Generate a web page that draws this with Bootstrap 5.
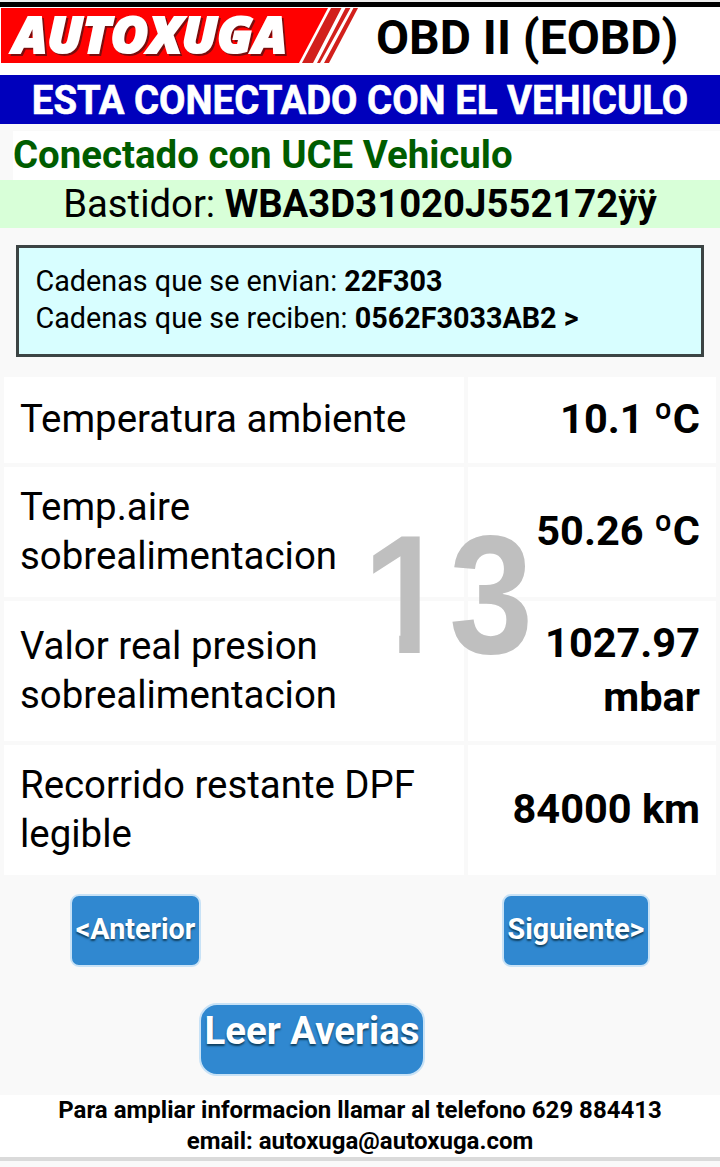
<!DOCTYPE html>
<html lang="es">
<head>
<meta charset="utf-8">
<meta name="viewport" content="width=device-width, initial-scale=1">
<title>AUTOXUGA OBD II (EOBD)</title>
<link rel="stylesheet" href="https://cdn.jsdelivr.net/npm/bootstrap@5.3.0/dist/css/bootstrap.min.css">
<style>
body{font-family:Roboto,"Liberation Sans",sans-serif;background:#f9f9f9;color:#000;height:1167px;overflow:hidden}
.topline{height:7px;background:#000;border-top:2px solid #eee}
.brandbar{height:68px;background:#fff}
.logo{width:360px;height:56px;flex:none;overflow:visible}
.brandtitle{font-size:48px;line-height:62px;font-weight:700;padding-left:16px;white-space:nowrap}
.connbar{height:49px;line-height:50px;font-size:41px;background:#0000bc;color:#fff;white-space:nowrap}
.connbar span{display:inline-block;transform:scaleX(.935);-webkit-text-stroke:.6px #fff}
.ecu{height:49px;line-height:48px;margin:7px 0 0 13px;font-size:38.4px;color:#005c00;background:#fff;white-space:nowrap}
.vin{height:48px;line-height:48px;font-size:38.3px;background:#d8ffd8;white-space:nowrap}
.frames{margin:17px 16px 20px;height:112px;border:3px solid #3c4444;background:#d8feff;padding:15px 16.5px;font-size:28.75px;line-height:37px;white-space:nowrap}
.readings{display:grid;grid-template-columns:460px 248px;grid-template-rows:86px 130px 140px 130px;gap:4px;padding:0 4px}
.readings>div{background:#fff;padding:0 16px 2px;display:flex;align-items:center}
.lbl{font-size:38.4px;line-height:49px}
.readings>.lbl:first-child{padding-bottom:4px}
.val{font-size:41.5px;line-height:54px;font-weight:700;justify-content:flex-end;text-align:right}
.page-no{left:362px;top:508px;font:700 168px/174px "Liberation Sans",sans-serif;color:#bfbfbf;white-space:nowrap}
.page-no span{display:inline-block;transform-origin:0 0;transform:scaleX(.9)}
.page-no .one{width:87px;transform:scaleX(.98);clip-path:polygon(0 0,59px 0,59px 100%,38px 100%,38px 50%,0 50%)}
.ctl{--bs-btn-bg:#3088d0;--bs-btn-color:#fff;--bs-btn-border-color:#c8e2f6;border-width:2px;padding:0 0 1px;font-weight:700;text-shadow:0 2px 2px #104060;height:73px;white-space:nowrap}
.nav-btns{padding:19px 70px 0;height:128px}
.prev{width:131px;font-size:28.7px;border-radius:9px}
.next{width:148px;font-size:28.7px;border-radius:9px}
.faults{width:226px;font-size:38.4px;border-radius:18px;margin-left:199px;line-height:50px;padding-bottom:18px}
.foot{margin-top:19px;height:66px;background:#fff;border-bottom:4px solid #dadada;font-size:24px;line-height:31px;white-space:nowrap}
</style>
<script src="https://cdn.jsdelivr.net/npm/bootstrap@5.3.0/dist/js/bootstrap.bundle.min.js"></script>
</head>
<body class="position-relative">
<div class="topline"></div>
<header class="brandbar d-flex align-items-start">
  <svg class="logo" viewBox="0 0 360 56" role="img" aria-label="AUTOXUGA">
    <path d="M1 1H328L299 56H1Z" fill="#f00"/>
    <path d="M331 1H358L329 56H302Z" fill="#d2201c"/>
    <path d="M342 0h4L317 56h-4ZM351 0h3L324 56h-4Z" fill="#fff"/>
    <g font-family="'Open Sans',sans-serif" font-weight="800" font-style="italic" font-size="50">
      <text x="15" y="48" textLength="274" lengthAdjust="spacingAndGlyphs" fill="#7b0d0d" stroke="#7b0d0d" stroke-width="2">AUTOXUGA</text>
      <text x="13" y="46" textLength="274" lengthAdjust="spacingAndGlyphs" fill="#fff" stroke="#fff" stroke-width="2.2">AUTOXUGA</text>
    </g>
  </svg>
  <div class="brandtitle">OBD II (EOBD)</div>
</header>
<div class="connbar text-center fw-bold"><span>ESTA CONECTADO CON EL VEHICULO</span></div>
<div class="ecu fw-bold">Conectado con UCE Vehiculo</div>
<div class="vin text-center">Bastidor: <b>WBA3D31020J552172ÿÿ</b></div>
<div class="frames">
  <div>Cadenas que se envian: <b>22F303</b></div>
  <div>Cadenas que se reciben: <b>0562F3033AB2 &gt;</b></div>
</div>
<main class="readings">
  <div class="lbl">Temperatura ambiente</div><div class="val">10.1 ºC</div>
  <div class="lbl">Temp.aire<br>sobrealimentacion</div><div class="val">50.26 ºC</div>
  <div class="lbl">Valor real presion<br>sobrealimentacion</div><div class="val">1027.97<br>mbar</div>
  <div class="lbl">Recorrido restante DPF<br>legible</div><div class="val">84000 km</div>
</main>
<div class="page-no position-absolute"><span class="one">1</span><span>3</span></div>
<div class="nav-btns d-flex justify-content-between align-items-start">
  <button class="btn ctl prev">&lt;Anterior</button>
  <button class="btn ctl next">Siguiente&gt;</button>
</div>
<button class="btn ctl faults d-block">Leer Averias</button>
<footer class="foot text-center fw-bold">Para ampliar informacion llamar al telefono 629 884413<br>email: autoxuga@autoxuga.com</footer>
</body>
</html>
